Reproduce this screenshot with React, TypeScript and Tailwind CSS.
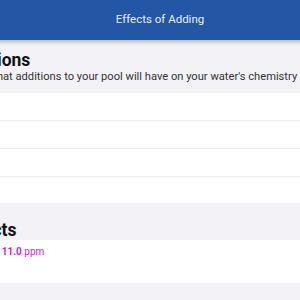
export default function App() {
  const rows = [0, 1, 2, 3];
  return (
    <div className="w-[300px] h-[300px] overflow-hidden bg-[#f2f2f7]" style={{ fontFamily: 'Roboto, "Noto Sans", sans-serif' }}>
      <div className="w-[450px] -ml-[65px]">
        {/* Toolbar */}
        <header className="h-10 bg-[#2356a5] flex items-center justify-center shadow-[0_2px_4px_rgba(0,0,0,0.25)] relative z-10">
          <span className="text-[#e9eef7] text-[11.5px]">Effects of Adding</span>
        </header>

        {/* Additions */}
        <div className="pl-4 pr-4 pt-[12px] pb-[8px]">
          <h2 className="text-[17.5px] font-bold text-[#111] leading-[17px] pl-[4px]">Additions</h2>
          <p className="text-[11.15px] text-[#333] leading-[16px] pl-[4px]">
            Check what additions to your pool will have on your water's chemistry
          </p>
        </div>
        <div className="bg-white">
          {rows.map((r) => (
            <div key={r} className={r < 3 ? 'h-[28px] pl-4' : 'h-[26px] pl-4'}>
              <div className={r < 3 ? 'h-full border-b border-[#ececec]' : 'h-full'} />
            </div>
          ))}
        </div>

        {/* Effects */}
        <div className="pl-[26px] pr-4 pt-[17px]">
          <h2 className="text-[17.5px] font-bold text-[#111] leading-[20px]">Effects</h2>
        </div>
        <div className="bg-white h-[43px] pl-[25px] pr-4 pt-[4px]">
          <p className="text-[10px] leading-[16px] text-[#333]">
            Chlorine: <span className="font-bold text-[#c61fd6]">11.0</span>{' '}
            <span className="text-[#c61fd6]">ppm</span>
          </p>
        </div>
      </div>
    </div>
  );
}
